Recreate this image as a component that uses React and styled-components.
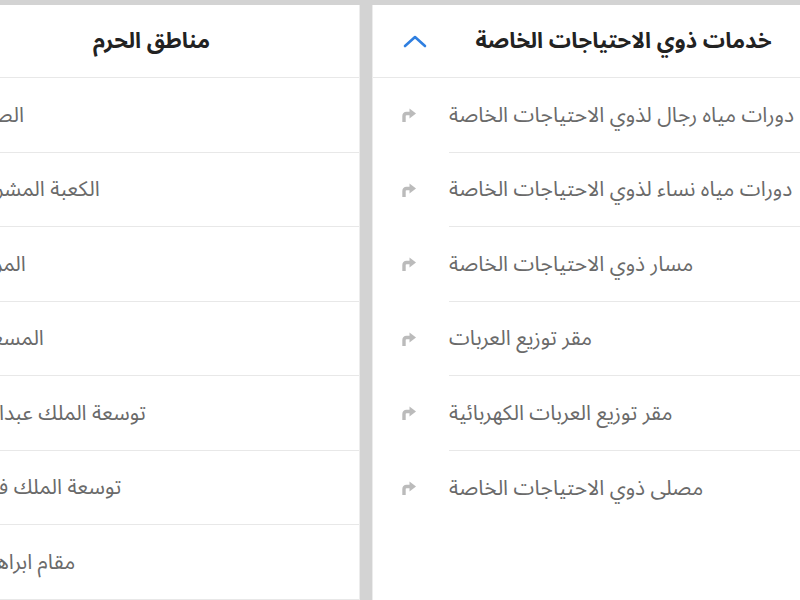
import React from 'react'
import styled, { createGlobalStyle } from 'styled-components'

const GlobalStyle = createGlobalStyle`
  html, body {
    margin: 0;
    padding: 0;
    background: #d3d3d3;
    overflow: hidden;
  }
  * {
    box-sizing: border-box;
  }
`

const sections = [
  {
    title: 'مناطق الحرم',
    closed: true,
    items: [
      'الصفا',
      'الكعبة المشرفة',
      'المروة',
      'المسعى',
      'توسعة الملك عبدالله',
      'توسعة الملك فهد',
      'مقام ابراهيم',
      'حجر اسماعيل'
    ]
  },
  {
    title: 'خدمات ذوي الاحتياجات الخاصة',
    items: [
      'دورات مياه رجال لذوي الاحتياجات الخاصة',
      'دورات مياه نساء لذوي الاحتياجات الخاصة',
      'مسار ذوي الاحتياجات الخاصة',
      'مقر توزيع العربات',
      'مقر توزيع العربات الكهربائية',
      'مصلى ذوي الاحتياجات الخاصة'
    ]
  }
]

const Chevron = () => (
  <svg width="24" height="14" viewBox="0 0 24 14">
    <path
      d="M2 12 L12 3 L22 12"
      fill="none"
      stroke="#2f7fe0"
      strokeWidth="2.6"
      strokeLinecap="round"
      strokeLinejoin="round"
    />
  </svg>
)

const ShareIcon = () => (
  <svg width="15" height="14" viewBox="0 0 15 14">
    <path
      d="M3 14 V8 Q3 5.5 5.5 5.5 H9.5"
      fill="none"
      stroke="#bbb"
      strokeWidth="3.4"
    />
    <path d="M8.5 0.5 L15 5.5 L8.5 10.5 Z" fill="#bbb" />
  </svg>
)

const Section = ({ title, items, closed }) => (
  <Panel>
    <Header>
      <ToggleCell>
        <Chevron />
      </ToggleCell>
      <Title dir="rtl">{title}</Title>
    </Header>
    <List $closed={closed}>
      {items.map(item => (
        <Row key={item}>
          <IconCell>
            <ShareIcon />
          </IconCell>
          <Body>
            <Label dir="rtl">{item}</Label>
          </Body>
        </Row>
      ))}
    </List>
  </Panel>
)

const App = () => (
  <>
    <GlobalStyle />
    <Viewport>
      <Track>
        {sections.map(s => (
          <Section key={s.title} {...s} />
        ))}
      </Track>
    </Viewport>
  </>
)

export default App

const Viewport = styled.div`
  width: 800px;
  height: 600px;
  overflow: hidden;
  background: #d3d3d3;
  padding-top: 5px;
  font-family: 'Noto Sans Arabic', 'DejaVu Sans', sans-serif;
`

const Track = styled.div`
  display: flex;
  gap: 12px;
  height: 100%;
  margin-left: -100px;
`

const Panel = styled.section`
  flex: 0 0 460px;
  height: 100%;
  background: #fff;
  border-left: 1px solid #ececec;
  border-right: 1px solid #ececec;
  overflow: hidden;
`

const Header = styled.header`
  display: flex;
  align-items: center;
  height: 73px;
  padding: 0 33px 0 28px;
  border-bottom: 1px solid #e8e8e8;
`

const ToggleCell = styled.div`
  flex: 0 0 48px;
  display: flex;
  align-items: center;
  padding-left: 2px;
`

const Title = styled.h2`
  flex: 1;
  margin: 0;
  text-align: center;
  white-space: nowrap;
  font-size: 22px;
  font-weight: 700;
  color: #222;
`

const List = styled.ul`
  list-style: none;
  margin: 0;
  padding: 0;

  li:last-child > div:last-child {
    border-bottom: ${p => (p.$closed ? '1px solid #e8e8e8' : 'none')};
  }
`

const Row = styled.li`
  display: flex;
  height: 74.5px;
  padding-left: 28px;
`

const IconCell = styled.div`
  flex: 0 0 48px;
  display: flex;
  align-items: center;
`

const Body = styled.div`
  flex: 1;
  display: flex;
  align-items: center;
  border-bottom: 1px solid #e8e8e8;
  min-width: 0;
`

const Label = styled.span`
  white-space: nowrap;
  font-size: 21px;
  color: #6a6a6a;
`
